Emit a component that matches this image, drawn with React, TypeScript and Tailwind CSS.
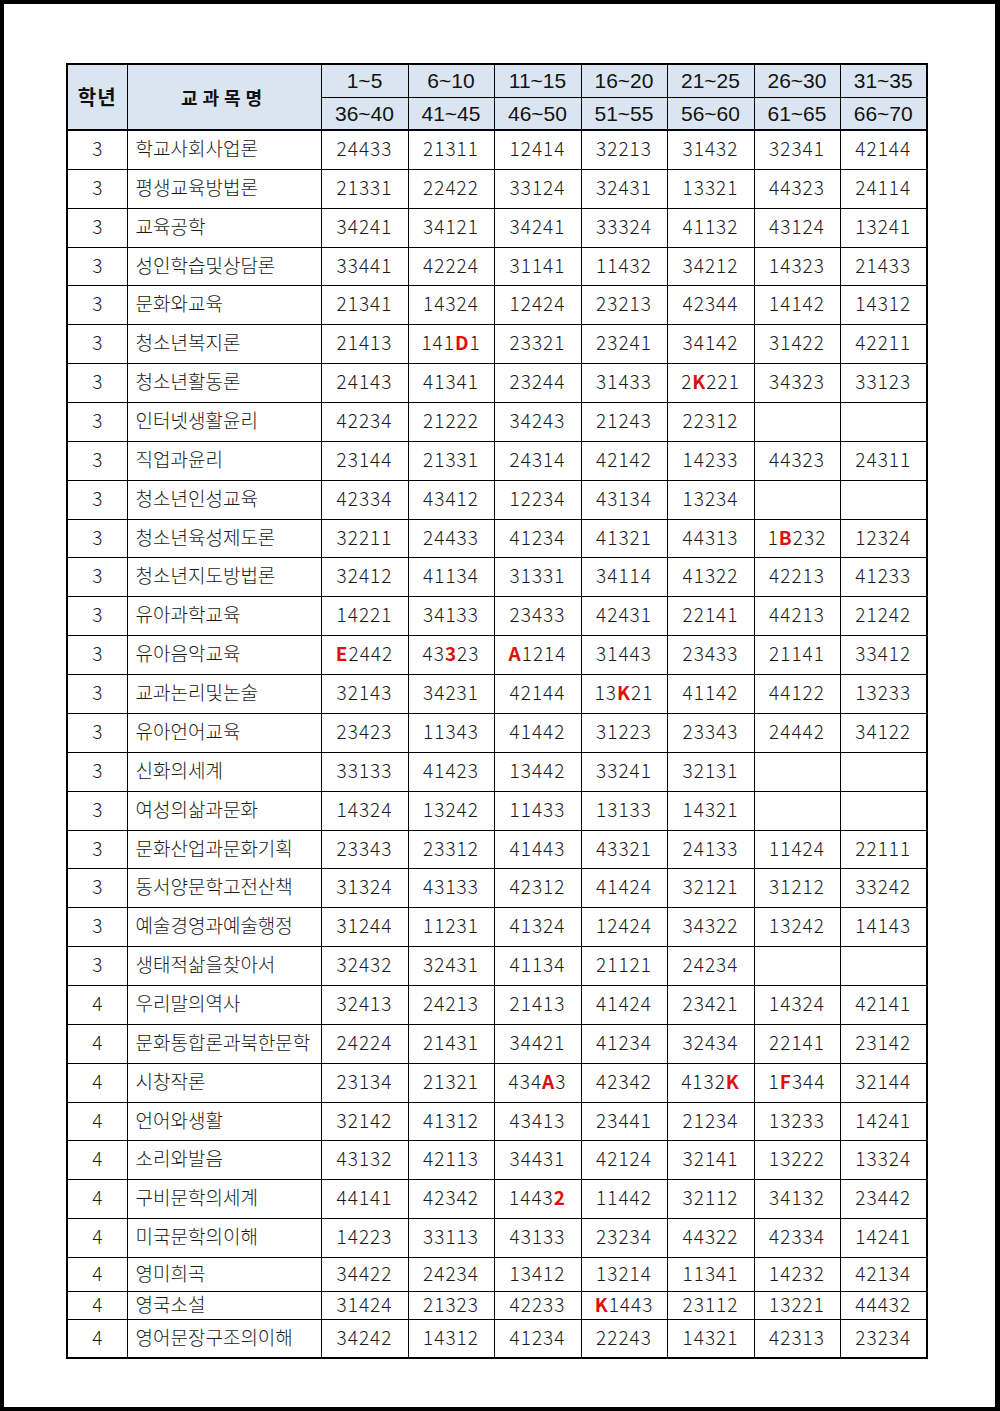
const ranges = [
  ["1~5", "36~40"],
  ["6~10", "41~45"],
  ["11~15", "46~50"],
  ["16~20", "51~55"],
  ["21~25", "56~60"],
  ["26~30", "61~65"],
  ["31~35", "66~70"],
];

// [학년, 교과목명, ...답안] — red characters are wrapped in [ ]
const rows: string[][] = [
  ["3", "학교사회사업론", "24433", "21311", "12414", "32213", "31432", "32341", "42144"],
  ["3", "평생교육방법론", "21331", "22422", "33124", "32431", "13321", "44323", "24114"],
  ["3", "교육공학", "34241", "34121", "34241", "33324", "41132", "43124", "13241"],
  ["3", "성인학습및상담론", "33441", "42224", "31141", "11432", "34212", "14323", "21433"],
  ["3", "문화와교육", "21341", "14324", "12424", "23213", "42344", "14142", "14312"],
  ["3", "청소년복지론", "21413", "141[D]1", "23321", "23241", "34142", "31422", "42211"],
  ["3", "청소년활동론", "24143", "41341", "23244", "31433", "2[K]221", "34323", "33123"],
  ["3", "인터넷생활윤리", "42234", "21222", "34243", "21243", "22312", "", ""],
  ["3", "직업과윤리", "23144", "21331", "24314", "42142", "14233", "44323", "24311"],
  ["3", "청소년인성교육", "42334", "43412", "12234", "43134", "13234", "", ""],
  ["3", "청소년육성제도론", "32211", "24433", "41234", "41321", "44313", "1[B]232", "12324"],
  ["3", "청소년지도방법론", "32412", "41134", "31331", "34114", "41322", "42213", "41233"],
  ["3", "유아과학교육", "14221", "34133", "23433", "42431", "22141", "44213", "21242"],
  ["3", "유아음악교육", "[E]2442", "43[3]23", "[A]1214", "31443", "23433", "21141", "33412"],
  ["3", "교과논리및논술", "32143", "34231", "42144", "13[K]21", "41142", "44122", "13233"],
  ["3", "유아언어교육", "23423", "11343", "41442", "31223", "23343", "24442", "34122"],
  ["3", "신화의세계", "33133", "41423", "13442", "33241", "32131", "", ""],
  ["3", "여성의삶과문화", "14324", "13242", "11433", "13133", "14321", "", ""],
  ["3", "문화산업과문화기획", "23343", "23312", "41443", "43321", "24133", "11424", "22111"],
  ["3", "동서양문학고전산책", "31324", "43133", "42312", "41424", "32121", "31212", "33242"],
  ["3", "예술경영과예술행정", "31244", "11231", "41324", "12424", "34322", "13242", "14143"],
  ["3", "생태적삶을찾아서", "32432", "32431", "41134", "21121", "24234", "", ""],
  ["4", "우리말의역사", "32413", "24213", "21413", "41424", "23421", "14324", "42141"],
  ["4", "문화통합론과북한문학", "24224", "21431", "34421", "41234", "32434", "22141", "23142"],
  ["4", "시창작론", "23134", "21321", "434[A]3", "42342", "4132[K]", "1[F]344", "32144"],
  ["4", "언어와생활", "32142", "41312", "43413", "23441", "21234", "13233", "14241"],
  ["4", "소리와발음", "43132", "42113", "34431", "42124", "32141", "13222", "13324"],
  ["4", "구비문학의세계", "44141", "42342", "1443[2]", "11442", "32112", "34132", "23442"],
  ["4", "미국문학의이해", "14223", "33113", "43133", "23234", "44322", "42334", "14241"],
  ["4", "영미희곡", "34422", "24234", "13412", "13214", "11341", "14232", "42134"],
  ["4", "영국소설", "31424", "21323", "42233", "[K]1443", "23112", "13221", "44432"],
  ["4", "영어문장구조의이해", "34242", "14312", "41234", "22243", "14321", "42313", "23234"],
];

function rowHeight(i: number) {
  if (i === 29) return "h-[34px]";
  if (i === 30) return "h-[28px]";
  if (i === 3 || i === 10 || i === 18 || i === 25) return "h-[38px]";
  return "h-[39px]";
}

function Answer({ value }: { value: string }) {
  const parts = value.split(/(\[[^\]]+\])/).filter(Boolean);
  return (
    <>
      {parts.map((p, i) =>
        p.startsWith("[") ? (
          <span key={i} className="text-[#e01010] font-semibold">
            {p.slice(1, -1)}
          </span>
        ) : (
          <span key={i}>{p}</span>
        )
      )}
    </>
  );
}

export default function App() {
  return (
    <div className="w-[1000px] h-[1411px] bg-white border-4 border-r-[5px] border-black pl-[62px] pt-[59px] font-['Noto_Sans_CJK_KR',sans-serif] text-[#1a1a1a]">
      <table className="table-fixed border-collapse border-2 border-black w-[861px]">
        <colgroup>
          <col className="w-[60px]" />
          <col className="w-[194px]" />
          <col className="w-[87px]" />
          <col className="w-[86px]" />
          <col className="w-[87px]" />
          <col className="w-[86px]" />
          <col className="w-[87px]" />
          <col className="w-[86px]" />
          <col className="w-[87px]" />
        </colgroup>
        <thead className="bg-[#dbe5f1]">
          <tr className="h-[33px]">
            <th
              rowSpan={2}
              className="border border-black border-b-2 text-[20px] font-bold tracking-[1px] text-[#111]"
            >
              학년
            </th>
            <th
              rowSpan={2}
              className="border border-black border-b-2 text-[18px] font-bold tracking-[5px] text-[#111]"
            >
              교과목명
            </th>
            {ranges.map((r) => (
              <th
                key={r[0]}
                className="border border-black p-0 leading-none font-['Liberation_Sans',sans-serif] font-normal text-[21px] text-[#111]"
              >
                {r[0]}
              </th>
            ))}
          </tr>
          <tr className="h-[33px]">
            {ranges.map((r) => (
              <th
                key={r[1]}
                className="border border-black border-b-2 p-0 leading-none font-['Liberation_Sans',sans-serif] font-normal text-[21px] text-[#111]"
              >
                {r[1]}
              </th>
            ))}
          </tr>
        </thead>
        <tbody>
          {rows.map((row, i) => (
            <tr key={i} className={rowHeight(i)}>
              <td className="border border-black p-0 pb-[4px] leading-none text-center text-[19px] font-light">
                {row[0]}
              </td>
              <td className="border border-black p-0 pl-2 pb-[4px] leading-none text-[19px] font-light whitespace-nowrap">
                {row[1]}
              </td>
              {row.slice(2).map((v, j) => (
                <td
                  key={j}
                  className="border border-black p-0 pb-[4px] leading-none text-center text-[19px] tracking-[1px] font-light"
                >
                  <Answer value={v} />
                </td>
              ))}
            </tr>
          ))}
        </tbody>
      </table>
    </div>
  );
}
